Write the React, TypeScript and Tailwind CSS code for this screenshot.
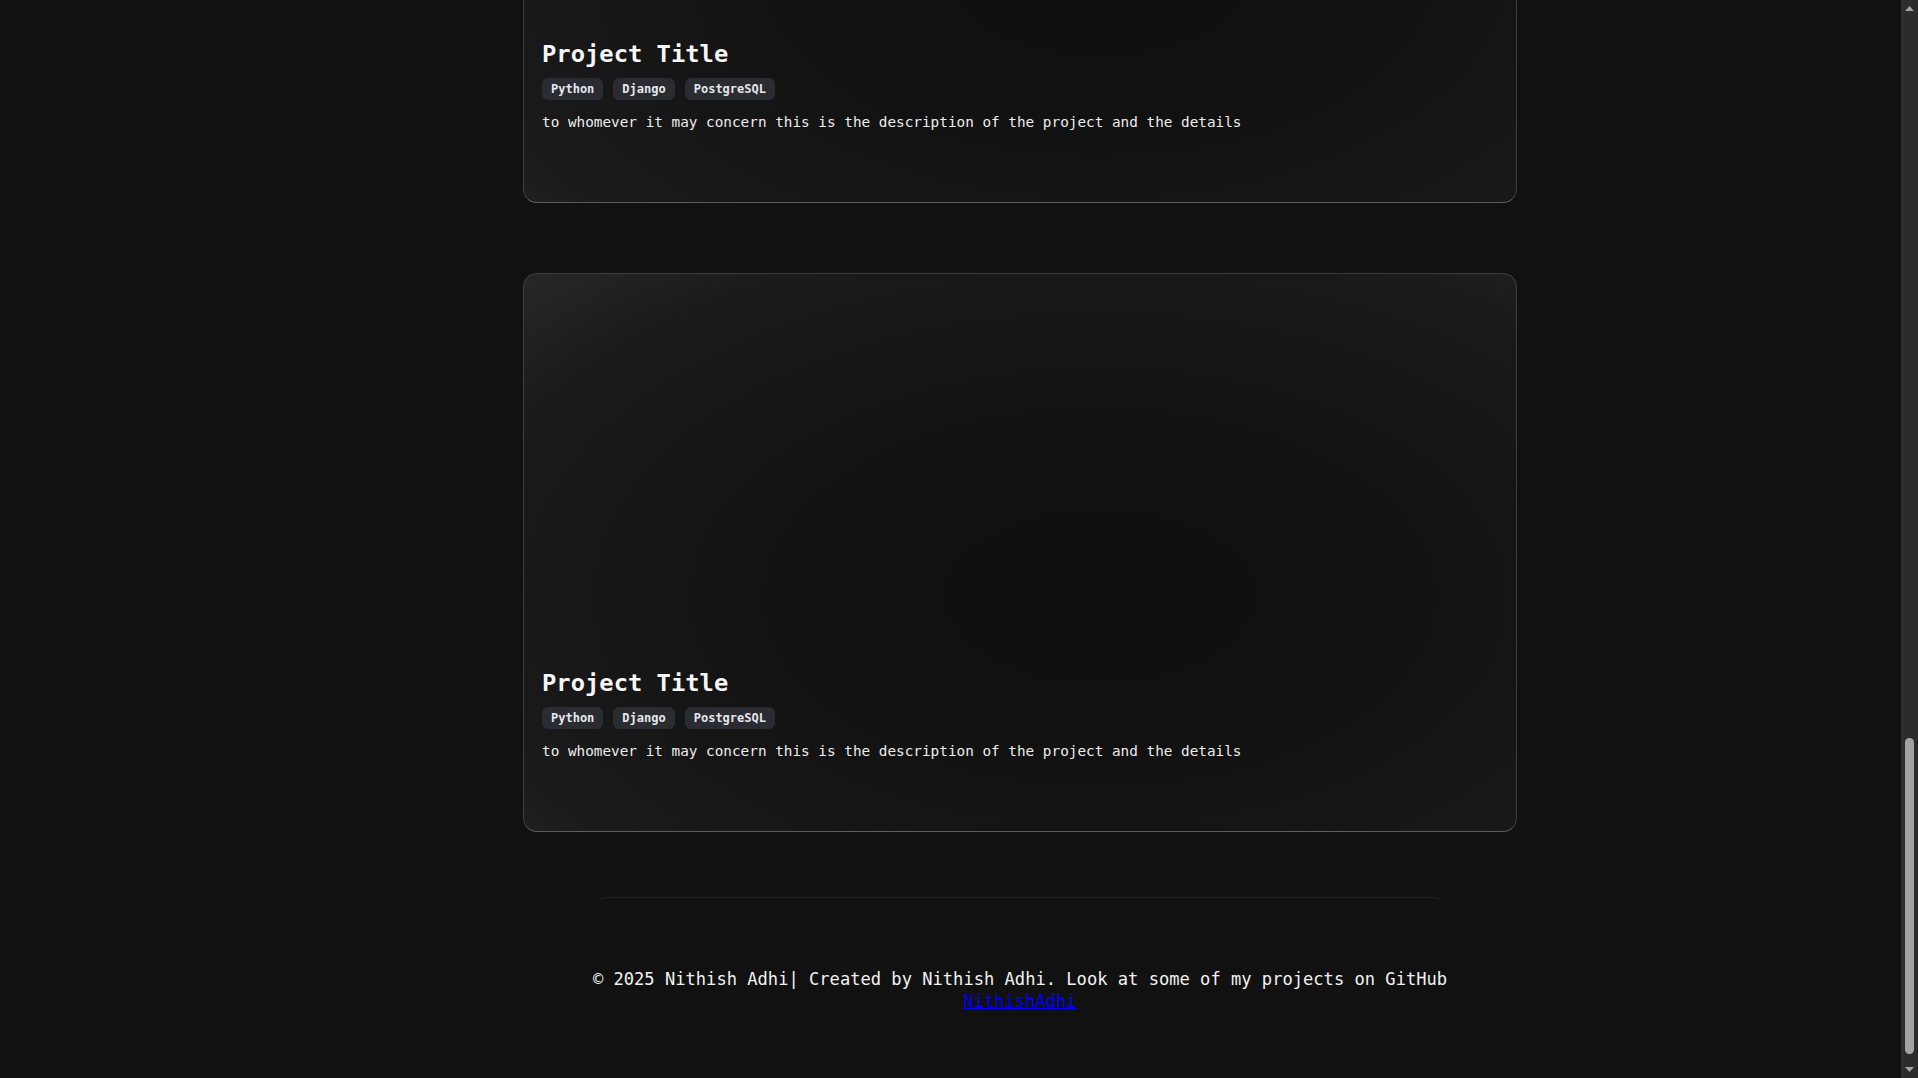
import { useLayoutEffect, useRef } from "react";

const projects = [1, 2, 3, 4, 5].map((n) => ({
  id: n,
  title: "Project Title",
  tags: ["Python", "Django", "PostgreSQL"],
  description:
    "to whomever it may concern this is the description of the project and the details",
}));

function ProjectCard({ project }: { project: (typeof projects)[number] }) {
  return (
    <div className="w-[994px] rounded-[14px] border border-[#3d3d3d] border-b-[#5c5c5c] bg-[radial-gradient(ellipse_at_58%_58%,#0f0f0f_0%,#121212_40%,#1a1a1a_78%,#272727_100%)] px-[18px] pt-[18px] pb-[70px]">
      {/* image placeholder */}
      <div className="h-[375px]" />
      <h3 className="text-[23.8px] leading-8 font-bold text-[#f7f7f7]">{project.title}</h3>
      <div className="mt-2 flex gap-[10px]">
        {project.tags.map((tag) => (
          <span
            key={tag}
            className="flex h-[22px] items-center rounded-md bg-[#2a2c32] px-[9px] text-[12px] font-semibold text-[#e6e7ea]"
          >
            {tag}
          </span>
        ))}
      </div>
      <p className="mt-3 text-[14.35px] leading-5 text-[#ededed]">{project.description}</p>
    </div>
  );
}

function Scrollbar() {
  return (
    <div className="flex h-screen w-[17px] shrink-0 flex-col bg-[#2c2c2c]">
      <div className="flex h-[17px] items-center justify-center">
        <svg width="9" height="5" viewBox="0 0 9 5">
          <path d="M4.5 0 L9 5 L0 5 Z" fill="#a3a3a3" />
        </svg>
      </div>
      <div className="flex flex-1 flex-col justify-end items-center pb-[7px]">
        <div className="h-[316px] w-[9px] rounded-full bg-[#a3a3a3]" />
      </div>
      <div className="flex h-[17px] items-center justify-center">
        <svg width="9" height="5" viewBox="0 0 9 5">
          <path d="M0 0 L9 0 L4.5 5 Z" fill="#a3a3a3" />
        </svg>
      </div>
    </div>
  );
}

export default function App() {
  const scrollRef = useRef<HTMLDivElement>(null);

  useLayoutEffect(() => {
    const el = scrollRef.current;
    if (el) el.scrollTop = el.scrollHeight;
  }, []);

  return (
    <div className="flex h-screen bg-[#111111] font-['DejaVu_Sans_Mono',monospace]">
      <div ref={scrollRef} className="h-screen flex-1 overflow-y-scroll [scrollbar-width:none]">
        <div className="flex flex-col items-center pt-[235px] pl-[139px]">
          <div className="flex flex-col gap-[70px]">
            {projects.map((p) => (
              <ProjectCard key={p.id} project={p} />
            ))}
          </div>

          <footer className="mt-[65px] w-[856px] rounded-t-2xl border-t border-[#232323] pt-[70px] pb-[66px] text-center text-[17.1px] leading-[22px] text-[#f2f2f2]">
            <p className="whitespace-nowrap">
              © 2025 Nithish Adhi| Created by Nithish Adhi. Look at some of my projects on GitHub
            </p>
            <a href="#" className="text-[#0000ee] underline">
              NithishAdhi
            </a>
          </footer>
        </div>
      </div>
      <Scrollbar />
    </div>
  );
}
